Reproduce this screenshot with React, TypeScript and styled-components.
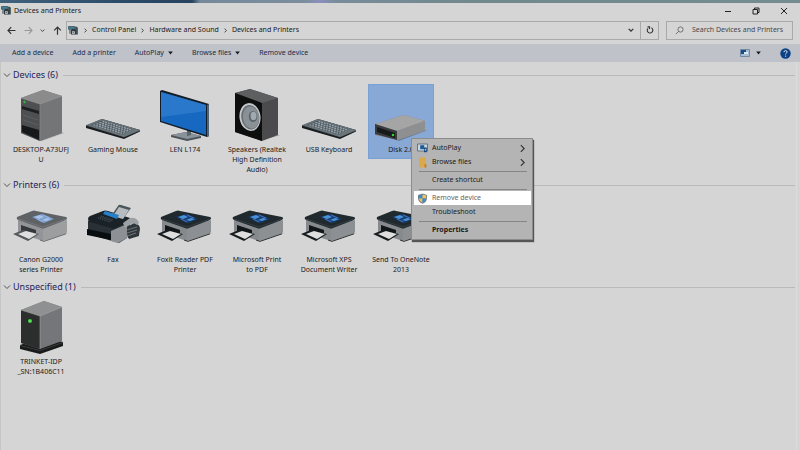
import React from 'react';
import styled, { createGlobalStyle, css } from 'styled-components';

const Global = createGlobalStyle`
  *, *::before, *::after { box-sizing: border-box; }
  html, body, #root { height: 100%; }
  body { margin: 0; background: #d5d5d5; color: #1a1a1a; font: 7px/12px "Noto Sans", "Open Sans", sans-serif; }
  button, input { font: inherit; color: inherit; background: none; border: 0; padding: 0; margin: 0; }
  h2 { margin: 0; font: inherit; }
  ul { margin: 0; padding: 0; list-style: none; }
  svg { display: block; flex: none; }
`;

const Page = styled.div`
  min-height: 100%;
  display: flex;
  flex-direction: column;
`;
const Desktop = styled.div`
  height: 3px;
  background: linear-gradient(90deg, #41617c 0%, #2b4a68 16%, #27435f 24%, #75899b 25%, #7c8e9d 38%, #8a8fbc 40%, #788c9a 42%, #71888c 60%, #748c8f 100%);
`;
const TitleBar = styled.header`
  display: flex;
  align-items: center;
  gap: 2px;
  height: 15px;
  padding: 0 12px 0 1px;
  margin-bottom: 2px;
`;
const Title = styled.span`
  flex: 1;
`;
const WindowButtons = styled.div`
  display: flex;
  gap: 20px;
`;
const IconButton = styled.button`
  display: grid;
  place-items: center;
  flex: none;
`;
const NavBar = styled.nav`
  display: flex;
  align-items: center;
  gap: 7px;
  height: 20px;
  padding: 0 7px;
`;
const NavButtons = styled.div`
  display: flex;
  align-items: center;
  justify-content: space-between;
  width: 55px;
  margin-right: -3px;
`;
const AddressBar = styled.div`
  display: flex;
  flex: 1;
  height: 19px;
  border: 1px solid #a9a9a9;
`;
const Crumbs = styled.ol`
  display: flex;
  flex: 1;
  align-items: center;
  gap: 4px;
  margin: 0;
  padding: 0 0 0 1px;
  list-style: none;
`;
const Crumb = styled.li`
  display: flex;
  align-items: center;
  gap: 4px;
`;
const CrumbLink = styled.a`
  color: inherit;
  text-decoration: none;
`;
const AddressEnd = styled.div`
  display: flex;
  button { width: 18px; }
  button + button { border-left: 1px solid #a9a9a9; }
`;
const SearchBox = styled.label`
  display: flex;
  align-items: center;
  gap: 8px;
  width: 127px;
  height: 19px;
  padding-left: 8px;
  border: 1px solid #a9a9a9;
`;
const SearchInput = styled.input`
  flex: 1;
  min-width: 0;
  outline: 0;
  &::placeholder { color: #484848; opacity: 1; }
`;
const CommandBar = styled.div`
  display: flex;
  align-items: center;
  gap: 19px;
  height: 18px;
  margin-top: 4px;
  padding: 0 9px 0 12px;
  background: #bfc2c9;
  color: #1d2a44;
`;
const Command = styled.button<{ $gap?: number }>`
  display: flex;
  align-items: center;
  gap: ${p => p.$gap ?? 4}px;
`;
const Spacer = styled.div`
  flex: 1;
`;
const Content = styled.main`
  flex: 1;
  margin-right: 3px;
  padding: 7px 1px 0 2px;
  border: solid;
  border-width: 0 1px 0 1px;
  border-color: transparent #dcdcdc transparent #c6c6c6;
`;
const Section = styled.section<{ $height: number }>`
  min-height: ${p => p.$height}px;
`;
const SectionHead = styled.h2`
  display: flex;
  align-items: center;
  gap: 5px;
  height: 12px;
  font-size: 9px;
  color: #1f2458;
  &::after { content: ''; flex: 1; height: 1px; background: #bababa; }
`;
const SectionToggle = styled.button`
  display: flex;
  align-items: center;
  gap: 2px;
`;
const Grid = styled.ul`
  display: flex;
  flex-wrap: wrap;
  align-items: flex-start;
  gap: 6px;
  padding: 3px 0 0 5px;
`;
const Tile = styled.li<{ $selected?: boolean }>`
  position: relative;
  width: 66px;
  min-height: 75px;
  padding: 3px 0 2px;
  text-align: center;
  line-height: 10px;
  ${p => p.$selected && css`background: #88a9d6; outline: 1px solid #79a1d6; outline-offset: -1px;`}
`;
const Art = styled.div`
  display: grid;
  place-items: end center;
  height: 58px;
  padding-bottom: 3px;
`;
const Label = styled.span`
  display: block;
  white-space: pre-line;
`;
const Menu = styled.ul`
  position: absolute;
  z-index: 2;
  left: 43px;
  top: 54px;
  width: 122px;
  padding: 2px 1px 2px 2px;
  background: #b4b4b4;
  border: 1px solid #8c8c8c;
  box-shadow: 1px 2px 1px #555;
  text-align: left;
`;
const MenuItem = styled.li<{ $divided?: boolean }>`
  ${p => p.$divided && css`
    &::before { content: ''; display: block; height: 1px; margin: 2px 4px 1px 5px; background: #858585; }
  `}
`;
const MenuButton = styled.button<{ $active?: boolean; $bold?: boolean }>`
  display: grid;
  grid-template-columns: 12px 1fr 9px;
  align-items: center;
  gap: 3px;
  width: 100%;
  height: 14px;
  padding: 0 4px 0 3px;
  text-align: left;
  line-height: 14px;
  font-weight: ${p => (p.$bold ? 700 : 400)};
  ${p => p.$active && css`background: #fff; color: #666;`}
`;

type ChevronProps = { dir: 'right' | 'down'; size?: number; color?: string; weight?: number };
const Chevron = ({ dir, size = 6, color = '#333', weight = 1.4 }: ChevronProps) => (
  <svg width={size} height={size} viewBox="0 0 8 8" fill="none" stroke={color} strokeWidth={weight}>
    <path d={dir === 'right' ? 'M2.5 1 5.5 4 2.5 7' : 'M1 2.5 4 5.5 7 2.5'} />
  </svg>
);
const Arrow = ({ dir, color = '#333' }: { dir: 'left' | 'right' | 'up'; color?: string }) => (
  <svg width="9" height="9" viewBox="0 0 9 9" fill="none" stroke={color} strokeWidth="1.2">
    <path d={{
      left: 'M8.5 4.5H1M4.2 1.2 1 4.5l3.2 3.3',
      right: 'M.5 4.5H8M4.8 1.2 8 4.5 4.8 7.8',
      up: 'M4.5 8.7V1M1.2 4.3 4.5 1l3.3 3.3',
    }[dir]} />
  </svg>
);
const Triangle = () => (
  <svg width="5" height="4" viewBox="0 0 5 4"><path d="M.2.4h4.6L2.5 3.4Z" fill="#15181f" /></svg>
);
const AppIcon = () => (
  <svg width="11" height="9" viewBox="0 0 11 9">
    <path d="M.5.5h6.3v2.8H.5Z" fill="#3f8199" stroke="#33464f" strokeWidth=".7" />
    <path d="M7 .8h1.8l1 1v6.7H7.8Z" fill="#3c4b53" />
    <path d="M1.3 3.2h1.4v4.6H1.3Z" fill="#5b6970" />
    <path d="m3 4 1.2-1H7l1 1v4.4H3Z" fill="#303b42" />
    <path d="M4 5.4h2.8v2.4H4Z" fill="#dce4e8" />
    <path d="m4.4 7.4.9-1.4.8 1.4" fill="none" stroke="#2c363b" strokeWidth=".6" />
  </svg>
);

const Tower = () => (
  <svg width="50" height="53" viewBox="0 0 50 53">
    <path d="m21 51 23-8 5 1-23 8Z" fill="#bbb" />
    <path d="M5 9 27 1l19 6v37l-22 8-19-8Z" fill="#777" />
    <path d="M5 9 27 1l19 6-22 8Z" fill="#8b8b8b" />
    <path d="m24 15 22-8v37l-22 8Z" fill="#747577" />
    <path d="m5 9 19 6v37L5 44Z" fill="#4d4f51" />
    <path d="m6 17 17 5v3L6 20Z" fill="#1d1f20" />
    <path d="m6 36 17 5v10L6 43Z" fill="#171819" />
    <path d="m7 26 15 5M7 31l15 5" stroke="#66696b" strokeWidth=".6" />
    <path d="m5 9 19 6 22-8" fill="none" stroke="#9d9d9d" strokeWidth=".6" />
    <path d="M24 15v37" stroke="#8c8c8c" strokeWidth=".6" />
    <circle cx="8.5" cy="13" r="1.2" fill="#36b93c" />
  </svg>
);
const Server = () => (
  <svg width="50" height="54" viewBox="0 0 50 54">
    <path d="m4 45 23-8 20 5v4l-23 8-20-5Z" fill="#191a1a" />
    <path d="m4 45 20 5 23-8v1l-23 8-20-5Z" fill="#3c3e3e" />
    <path d="M5 10 28 1l18 6v34l-22 8-19-6Z" fill="#757679" />
    <path d="M5 10 28 1l18 6-22 9Z" fill="#8f9092" />
    <path d="m5 10 19 6v33L5 43Z" fill="#2c2d2d" />
    <path d="m5 10 19 6 22-9M24 16v33" fill="none" stroke="#a6a6a6" strokeWidth=".6" />
    <circle cx="14" cy="21" r="2.1" fill="#35ce3d" />
    <circle cx="14" cy="21" r=".8" fill="#9af28e" />
  </svg>
);
const Keyboard = () => (
  <svg width="56" height="24" viewBox="0 0 56 24">
    <path d="M1 7.5 17 1l38 11v1.5L39 21 1 10Z" fill="#191d20" />
    <path d="M1.5 7 17 1l38 11-16 6.8Z" fill="#69747b" />
    <path d="M6 7 18 2.2l31 9.3L37 16.4Z" fill="#4b565d" />
    <g fill="none" stroke="#98a3aa" strokeWidth="1.4" strokeDasharray="2 .8">
      <path d="m17.5 3.2 30 9M14.5 4.4l30 9M11.5 5.6l30 9M8.5 6.8l30 9" />
    </g>
    <path d="m2 7.4 37 11.4 16-6.6" fill="none" stroke="#8e999f" strokeWidth=".5" />
  </svg>
);
const Monitor = () => (
  <svg width="52" height="54" viewBox="0 0 52 54">
    <path d="m12 47 15-3 15 4v2l-14 3-16-4Z" fill="#4c545a" />
    <path d="m12 47 15-3 15 4-14 3Z" fill="#899299" />
    <path d="M28 38h4v9l-4 1Z" fill="#59636a" />
    <path d="m1 3 2-1 47 14v32l-2 1L1 34Z" fill="#141d27" />
    <path d="m2 4 45 13v30L2 33Z" fill="#1768c0" />
    <path d="m2 4 45 13v6L2 29Z" fill="#3381d1" opacity=".65" />
    <path d="m48 17 2-1v32l-2 1Z" fill="#526477" />
  </svg>
);
const Speaker = () => (
  <svg width="52" height="54" viewBox="0 0 52 54">
    <path d="m27 53 19-6h4l-22 6Z" fill="#aaa" />
    <path d="m4 5 15-4 28 9v37l-16 6-27-9Z" fill="#4b4b4d" />
    <path d="m4 5 15-4 28 9-16 5Z" fill="#5e5f61" />
    <path d="m4 5 27 10v38L4 44Z" fill="#0d0e0e" />
    <ellipse cx="19" cy="29" rx="10.5" ry="14" transform="rotate(-8 19 29)" fill="#c4c7c9" />
    <ellipse cx="19.3" cy="29.3" rx="9" ry="12.3" transform="rotate(-8 19.3 29.3)" fill="#687076" />
    <ellipse cx="20" cy="29.5" rx="8" ry="11" transform="rotate(-8 20 29.5)" fill="#8a9196" />
    <ellipse cx="22" cy="28.5" rx="4.2" ry="5.6" fill="#59636a" />
    <ellipse cx="22.5" cy="28" rx="3" ry="4.2" fill="#a1a9ae" />
  </svg>
);
const Disk = () => (
  <svg width="54" height="28" viewBox="0 0 54 28">
    <path d="m22 26 26-9 6-1-29 11Z" fill="#677f9e" />
    <path d="M1 10 30 1l21 6v10l-27 9L1 21Z" fill="#828488" />
    <path d="M1 10 30 1l21 6-28 10Z" fill="#a5a5a6" />
    <path d="m23 17 28-10v10l-28 9Z" fill="#8e8f91" />
    <path d="m1 10 22 7v9L1 20Z" fill="#393b3c" />
    <path d="m3 13 18 6v5L3 18Z" fill="#171a1a" />
    <circle cx="19" cy="21" r="1.3" fill="#36cf3a" />
  </svg>
);
const Printer = ({ light = false }: { light?: boolean }) => (
  <svg width="56" height="44" viewBox="0 0 56 44">
    <path d="m31 32 18-7h7l-22 7Z" fill="#bcbcbc" />
    <path d="m5 12 25 7v14L5 25Z" fill={light ? '#929497' : '#868a8d'} />
    <path d="m30 19 24-7v12q0 1-2 2l-18 6-4 1Z" fill={light ? '#9c9ea0' : '#8d9093'} />
    <path d="m8 27 5 2m14 3 4 1.4 22-7.6" fill="none" stroke={light ? '#6c6e70' : '#2d3437'} strokeWidth="1" />
    <path d="m4 9 15-6q2-1 4 0l30 6q2 1 0 3l-21 8q-2 1-4 0L5 12q-2-1-1-3Z" fill={light ? '#5f6265' : '#20292d'} />
    <path d="m5 11 25 8 23-8" fill="none" stroke={light ? '#7d7f82' : '#3c474c'} strokeWidth=".7" />
    <path d="m19 9 10-3 12 5-10 4Z" fill={light ? '#7d9fd0' : '#173e72'} />
    <path d="m21 9 6-2 4 2-5 2Zm8 3 5-2 4 1-5 2Z" fill={light ? '#aac2e4' : '#4b93d6'} />
    <path d="m30 7 7 3m-13 1 6 3" stroke={light ? '#8faedb' : '#3a6dc0'} strokeWidth="1.2" />
    <path d="m8 17 15 5v6L8 25Z" fill={light ? '#35393b' : '#111719'} />
    <path d="m0 26 10-4 16 4-11 7Z" fill={light ? '#55585a' : '#171c1e'} />
    <path d="m5 26 8-3 11 3-8 5Z" fill="#dedede" />
  </svg>
);
const Fax = () => (
  <svg width="56" height="48" viewBox="0 0 56 48">
    <path d="m43 33 11-5v4l-10 3Z" fill="#2b3236" />
    <path d="m3 17 22-8 21 7-4 18-8 5L3 30Z" fill="#293036" />
    <path d="m26 27 16-7v14l-9 5-7-2Z" fill="#8d9195" />
    <path d="m3 15q0-2 2-3l13-5q2-1 5 0l22 7q2 1 0 3l-14 7q-3 1-5 0L5 18q-2-1-2-3Z" fill="#1a2228" />
    <path d="m26 12 7-10q1-2 3-1l10 3-8 11Z" fill="#4b555c" />
    <path d="m28 12 6-9 10 3-6 9Z" fill="#b6bbc0" />
    <path d="m18 10 2-3 14 4-2 4Z" fill="#257fc9" />
    <path d="m15 13 12 4m-14-3 12 4m-9-6 12 4" stroke="#596870" strokeWidth=".8" strokeDasharray="1 1" />
    <path d="m2 25 24 5v6L2 31Z" fill="#080d10" />
    <path d="m42 23 7-4q6 1 6 6l-1 6-11 3Z" fill="#30383d" />
    <path d="m38 19 7-5q7-1 9 5l-2 2q-3-3-6-1l-6 4Z" fill="#9ca1a4" />
    <path d="m42 26 10-3m-10 6 10-3m-10 6 9-3" stroke="#7b8388" strokeWidth=".8" />
  </svg>
);

const AutoPlayIcon = () => (
  <svg width="11" height="10" viewBox="0 0 11 10">
    <path d="M.5 1h10v7H.5Z" fill="#cbd5df" stroke="#4c6175" strokeWidth=".8" />
    <path d="M3.2 2.2h4v4h-4Z" fill="#1b5c9b" />
    <path d="M7 4.5h2.8v4.7H7Z" fill="#14467b" />
    <path d="M7.8 5.5v2.4l1.6-1.2Z" fill="#cbdcec" />
  </svg>
);
const FolderIcon = () => (
  <svg width="11" height="11" viewBox="0 0 11 11">
    <path d="M2 .5h6l1 1v9H2Z" fill="#d9a94c" /><path d="m7.5 7 2 .5v3h-2Z" fill="#bd8429" />
  </svg>
);
const ShieldIcon = () => (
  <svg width="11" height="11" viewBox="0 0 11 11">
    <path d="M5.5.4 10 2v3q0 4-4.5 5.7Q1 9 1 5V2Z" fill="#75818b" />
    <path d="M5.5 1.4v4H1.8V2.5Z" fill="#398bd0" /><path d="M5.5 1.4v4h3.7V2.5Z" fill="#f0c557" />
    <path d="M5.5 5.4v4.2Q2.2 8 1.9 5.4Z" fill="#f0c557" /><path d="M5.5 5.4v4.2Q8.8 8 9.1 5.4Z" fill="#398bd0" />
  </svg>
);

const menuItems = [
  { text: 'AutoPlay', icon: <AutoPlayIcon />, more: true },
  { text: 'Browse files', icon: <FolderIcon />, more: true },
  { text: 'Create shortcut', divided: true },
  { text: 'Remove device', icon: <ShieldIcon />, divided: true, active: true },
  { text: 'Troubleshoot' },
  { text: 'Properties', divided: true, bold: true },
];
const ContextMenu = () => (
  <Menu>
    {menuItems.map(m => (
      <MenuItem key={m.text} $divided={m.divided}>
        <MenuButton $active={m.active} $bold={m.bold}>
          <span>{m.icon}</span>
          <span>{m.text}</span>
          {m.more && <Chevron dir="right" size={9} weight={1} />}
        </MenuButton>
      </MenuItem>
    ))}
  </Menu>
);

type Item = { name: string; art: React.ReactNode; selected?: boolean };
const sections: { title: string; height: number; items: Item[] }[] = [
  { title: 'Devices (6)', height: 110, items: [
    { name: 'DESKTOP-A73UFJ\nU', art: <Tower /> },
    { name: 'Gaming Mouse', art: <Keyboard /> },
    { name: 'LEN L174', art: <Monitor /> },
    { name: 'Speakers (Realtek\nHigh Definition\nAudio)', art: <Speaker /> },
    { name: 'USB Keyboard', art: <Keyboard /> },
    { name: 'Disk 2.0', art: <Disk />, selected: true },
  ] },
  { title: 'Printers (6)', height: 102, items: [
    { name: 'Canon G2000\nseries Printer', art: <Printer light /> },
    { name: 'Fax', art: <Fax /> },
    { name: 'Foxit Reader PDF\nPrinter', art: <Printer /> },
    { name: 'Microsoft Print\nto PDF', art: <Printer /> },
    { name: 'Microsoft XPS\nDocument Writer', art: <Printer /> },
    { name: 'Send To OneNote\n2013', art: <Printer /> },
  ] },
  { title: 'Unspecified (1)', height: 100, items: [
    { name: 'TRINKET-IDP\n_SN:1B406C11', art: <Server /> },
  ] },
];

export default function App() {
  return (
    <Page>
      <Global />
      <Desktop />
      <TitleBar>
        <AppIcon />
        <Title>Devices and Printers</Title>
        <WindowButtons>
          <IconButton aria-label="Minimize"><svg width="8" height="8" viewBox="0 0 8 8"><path d="M1 4.5h6" stroke="#222" /></svg></IconButton>
          <IconButton aria-label="Restore"><svg width="8" height="8" viewBox="0 0 8 8" fill="none" stroke="#222"><path d="M1 2.5h4.5V7H1ZM2.5 2.5V1H7v4.5H5.5" /></svg></IconButton>
          <IconButton aria-label="Close"><svg width="8" height="8" viewBox="0 0 8 8"><path d="m1 1 6 6m0-6L1 7" stroke="#222" /></svg></IconButton>
        </WindowButtons>
      </TitleBar>
      <NavBar>
        <NavButtons>
          <IconButton aria-label="Back"><Arrow dir="left" /></IconButton>
          <IconButton aria-label="Forward"><Arrow dir="right" color="#999" /></IconButton>
          <IconButton aria-label="Recent"><Chevron dir="down" size={5} /></IconButton>
          <IconButton aria-label="Up"><Arrow dir="up" /></IconButton>
        </NavButtons>
        <AddressBar>
          <Crumbs>
            <AppIcon />
            {['Control Panel', 'Hardware and Sound', 'Devices and Printers'].map(c => (
              <Crumb key={c}><Chevron dir="right" size={5} /><CrumbLink href="#">{c}</CrumbLink></Crumb>
            ))}
          </Crumbs>
          <AddressEnd>
            <IconButton aria-label="History"><Chevron dir="down" weight={1.8} /></IconButton>
            <IconButton aria-label="Refresh">
              <svg width="8" height="8" viewBox="0 0 8 8" fill="none" stroke="#333" strokeWidth="1.1"><path d="M5.4 1.8A2.8 2.8 0 1 1 2 2.3M1.5.9h2v2" /></svg>
            </IconButton>
          </AddressEnd>
        </AddressBar>
        <SearchBox>
          <svg width="9" height="9" viewBox="0 0 9 9" fill="none" stroke="#666" strokeWidth=".9"><circle cx="5.5" cy="3.5" r="2.6" /><path d="M3.6 5.4.8 8.2" /></svg>
          <SearchInput aria-label="Search Devices and Printers" placeholder="Search Devices and Printers" />
        </SearchBox>
      </NavBar>
      <CommandBar>
        <Command>Add a device</Command>
        <Command>Add a printer</Command>
        <Command>AutoPlay <Triangle /></Command>
        <Command>Browse files <Triangle /></Command>
        <Command>Remove device</Command>
        <Spacer />
        <Command aria-label="View" $gap={6}>
          <svg width="10" height="8" viewBox="0 0 10 8"><path d="M.5.5h9v7h-9Z" fill="#a8bdd3" stroke="#7389a1" /><path d="M1 1h5v4H1Z" fill="#174d8b" /><path d="M4 3h4v2H4Z" fill="#dce6ef" /></svg>
          <Triangle />
        </Command>
        <IconButton aria-label="Help">
          <svg width="11" height="11" viewBox="0 0 11 11"><circle cx="5.5" cy="5.5" r="5.2" fill="#0b4185" /><path d="M3.9 4.2q.1-1.6 1.7-1.6 1.6.1 1.5 1.4 0 .8-.8 1.2-.8.5-.7 1.2" fill="none" stroke="#dce6f4" strokeWidth="1" /><circle cx="5.6" cy="8.1" r=".7" fill="#dce6f4" /></svg>
        </IconButton>
      </CommandBar>
      <Content>
        {sections.map(s => (
          <Section key={s.title} $height={s.height}>
            <SectionHead>
              <SectionToggle><Chevron dir="down" size={8} weight={0.9} color="#444" />{s.title}</SectionToggle>
            </SectionHead>
            <Grid>
              {s.items.map(i => (
                <Tile key={i.name} $selected={i.selected}>
                  <Art>{i.art}</Art>
                  <Label>{i.name}</Label>
                  {i.selected && <ContextMenu />}
                </Tile>
              ))}
            </Grid>
          </Section>
        ))}
      </Content>
    </Page>
  );
}
